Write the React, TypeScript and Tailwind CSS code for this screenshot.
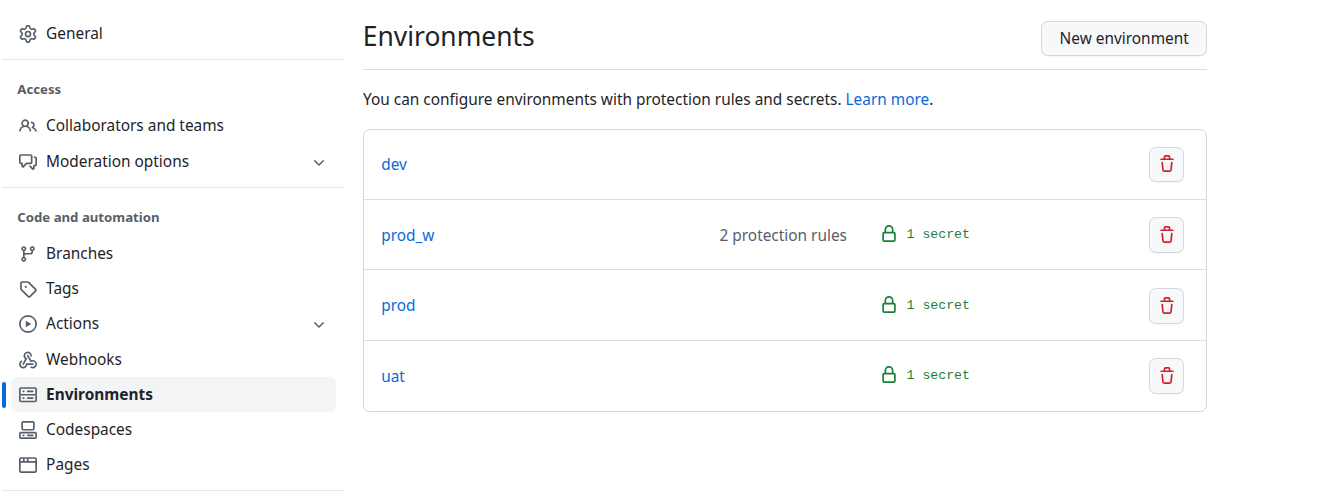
import React from "react";

const ICONS = {
  gear: "M8 0a8.2 8.2 0 0 1 .701.031C9.444.095 9.99.645 10.16 1.29l.288 1.107c.018.066.079.158.212.224.231.114.454.243.668.386.123.082.233.09.299.071l1.103-.303c.644-.176 1.392.021 1.82.63.27.385.506.792.704 1.218.315.675.111 1.422-.364 1.891l-.814.806c-.049.048-.098.147-.088.294.016.257.016.515 0 .772-.01.147.038.246.088.294l.814.806c.475.469.679 1.216.364 1.891a7.977 7.977 0 0 1-.704 1.217c-.428.61-1.176.807-1.82.63l-1.102-.302c-.067-.019-.177-.011-.3.071a5.909 5.909 0 0 1-.668.386c-.133.066-.194.158-.211.224l-.29 1.106c-.168.646-.715 1.196-1.458 1.26a8.006 8.006 0 0 1-1.402 0c-.743-.064-1.289-.614-1.458-1.26l-.289-1.106c-.018-.066-.079-.158-.212-.224a5.738 5.738 0 0 1-.668-.386c-.123-.082-.233-.09-.299-.071l-1.103.303c-.644.176-1.392-.021-1.82-.63a8.12 8.12 0 0 1-.704-1.218c-.315-.675-.111-1.422.363-1.891l.815-.806c.05-.048.098-.147.088-.294a6.214 6.214 0 0 1 0-.772c.01-.147-.038-.246-.088-.294l-.815-.806C.635 6.045.431 5.298.746 4.623a7.92 7.92 0 0 1 .704-1.217c.428-.61 1.176-.807 1.82-.63l1.102.302c.067.019.177.011.3-.071.214-.143.437-.272.668-.386.133-.066.194-.158.211-.224l.29-1.106C6.009.645 6.556.095 7.299.03 7.53.01 7.764 0 8 0Zm-.571 1.525c-.036.003-.108.036-.137.146l-.289 1.105c-.147.561-.549.967-.998 1.189-.173.086-.34.183-.5.29-.417.278-.97.423-1.529.27l-1.103-.303c-.109-.03-.175.016-.195.045-.22.312-.412.644-.573.99-.014.031-.021.11.059.19l.815.806c.411.406.562.957.53 1.456a4.709 4.709 0 0 0 0 .582c.032.499-.119 1.05-.53 1.456l-.815.806c-.081.08-.073.159-.059.19.162.346.353.677.573.989.02.03.085.076.195.046l1.102-.303c.56-.153 1.113-.008 1.53.27.161.107.328.204.501.29.447.222.85.629.997 1.189l.289 1.105c.029.109.101.143.137.146a6.6 6.6 0 0 0 1.142 0c.036-.003.108-.036.137-.146l.289-1.105c.147-.561.549-.967.998-1.189.173-.086.34-.183.5-.29.417-.278.97-.423 1.529-.27l1.103.303c.109.029.175-.016.195-.045.22-.313.411-.644.573-.99.014-.031.021-.11-.059-.19l-.815-.806c-.411-.406-.562-.957-.53-1.456a4.709 4.709 0 0 0 0-.582c-.032-.499.119-1.05.53-1.456l.815-.806c.081-.08.073-.159.059-.19a6.464 6.464 0 0 0-.573-.989c-.02-.03-.085-.076-.195-.046l-1.102.303c-.56.153-1.113.008-1.53-.27a4.44 4.44 0 0 0-.501-.29c-.447-.222-.85-.629-.997-1.189l-.289-1.105c-.029-.11-.101-.143-.137-.146a6.6 6.6 0 0 0-1.142 0ZM11 8a3 3 0 1 1-6 0 3 3 0 0 1 6 0ZM9.5 8a1.5 1.5 0 1 0-3.001.001A1.5 1.5 0 0 0 9.5 8Z",
  people: "M2 5.5a3.5 3.5 0 1 1 5.898 2.549 5.508 5.508 0 0 1 3.034 4.084.75.75 0 1 1-1.482.235 4 4 0 0 0-7.9 0 .75.75 0 0 1-1.482-.236A5.507 5.507 0 0 1 3.102 8.05 3.493 3.493 0 0 1 2 5.5ZM11 4a3.001 3.001 0 0 1 2.22 5.018 5.01 5.01 0 0 1 2.56 3.012.749.749 0 0 1-.885.954.752.752 0 0 1-.549-.514 3.507 3.507 0 0 0-2.522-2.372.75.75 0 0 1-.574-.73v-.352a.75.75 0 0 1 .416-.672A1.5 1.5 0 0 0 11 5.5.75.75 0 0 1 11 4Zm-5.5-.5a2 2 0 1 0-.001 3.999A2 2 0 0 0 5.5 3.5Z",
  discussion: "M1.75 1h8.5c.966 0 1.75.784 1.75 1.75v5.5A1.75 1.75 0 0 1 10.25 10H7.061l-2.574 2.573A1.458 1.458 0 0 1 2 11.543V10h-.25A1.75 1.75 0 0 1 0 8.25v-5.5C0 1.784.784 1 1.75 1ZM1.5 2.75v5.5c0 .138.112.25.25.25h1a.75.75 0 0 1 .75.75v2.19l2.72-2.72a.749.749 0 0 1 .53-.22h3.5a.25.25 0 0 0 .25-.25v-5.5a.25.25 0 0 0-.25-.25h-8.5a.25.25 0 0 0-.25.25Zm13 2a.25.25 0 0 0-.25-.25h-.5a.75.75 0 0 1 0-1.5h.5c.966 0 1.75.784 1.75 1.75v5.5A1.75 1.75 0 0 1 14.25 12H14v1.543a1.458 1.458 0 0 1-2.487 1.03L9.22 12.28a.749.749 0 0 1 .326-1.275.749.749 0 0 1 .734.215l2.22 2.22v-2.19a.75.75 0 0 1 .75-.75h1a.25.25 0 0 0 .25-.25Z",
  branch: "M9.5 3.25a2.25 2.25 0 1 1 3 2.122V6A2.5 2.5 0 0 1 10 8.5H6a1 1 0 0 0-1 1v1.128a2.251 2.251 0 1 1-1.5 0V5.372a2.25 2.25 0 1 1 1.5 0v1.836A2.493 2.493 0 0 1 6 7h4a1 1 0 0 0 1-1v-.628A2.25 2.25 0 0 1 9.5 3.25Zm-6 0a.75.75 0 1 0 1.5 0 .75.75 0 0 0-1.5 0Zm8.25-.75a.75.75 0 1 0 0 1.5.75.75 0 0 0 0-1.5ZM4.25 12a.75.75 0 1 0 0 1.5.75.75 0 0 0 0-1.5Z",
  tag: "M1 7.775V2.75C1 1.784 1.784 1 2.75 1h5.025c.464 0 .91.184 1.238.513l6.25 6.25a1.75 1.75 0 0 1 0 2.474l-5.026 5.026a1.75 1.75 0 0 1-2.474 0l-6.25-6.25A1.752 1.752 0 0 1 1 7.775Zm1.5 0c0 .066.026.13.073.177l6.25 6.25a.25.25 0 0 0 .354 0l5.025-5.025a.25.25 0 0 0 0-.354l-6.25-6.25a.25.25 0 0 0-.177-.073H2.75a.25.25 0 0 0-.25.25ZM6 5a1 1 0 1 1 0 2 1 1 0 0 1 0-2Z",
  play: "M8 0a8 8 0 1 1 0 16A8 8 0 0 1 8 0ZM1.5 8a6.5 6.5 0 1 0 13 0 6.5 6.5 0 0 0-13 0Zm4.879-2.773 4.264 2.559a.25.25 0 0 1 0 .428l-4.264 2.559A.25.25 0 0 1 6 10.559V5.442a.25.25 0 0 1 .379-.215Z",
  webhook: "M5.5 4.25a2.25 2.25 0 0 1 4.5 0 .75.75 0 0 0 1.5 0 3.75 3.75 0 1 0-6.14 2.889l-2.272 4.258a.75.75 0 0 0 1.324.706L7 7.25a.75.75 0 0 0-.309-1.015A2.25 2.25 0 0 1 5.5 4.25ZM7.364 3.607a.75.75 0 0 1 1.03.257l2.608 4.349a3.75 3.75 0 1 1-.628 6.785.75.75 0 0 1 .752-1.299 2.25 2.25 0 1 0-.033-3.88.75.75 0 0 1-1.03-.256L7.107 4.636a.75.75 0 0 1 .257-1.03ZM2.9 8.776A.75.75 0 0 1 2.625 9.8 2.25 2.25 0 1 0 6 11.75a.75.75 0 0 1 .75-.751h5.5a.75.75 0 0 1 0 1.5H7.425a3.751 3.751 0 1 1-5.55-3.998.75.75 0 0 1 1.024.274Z",
  server: "M1.75 1h12.5c.966 0 1.75.784 1.75 1.75v4c0 .372-.116.717-.314 1 .198.283.314.628.314 1v4a1.75 1.75 0 0 1-1.75 1.75H1.75A1.75 1.75 0 0 1 0 12.75v-4c0-.358.109-.707.314-1a1.739 1.739 0 0 1-.314-1v-4C0 1.784.784 1 1.75 1ZM1.5 2.75v4c0 .138.112.25.25.25h12.5a.25.25 0 0 0 .25-.25v-4a.25.25 0 0 0-.25-.25H1.75a.25.25 0 0 0-.25.25Zm.25 5.75a.25.25 0 0 0-.25.25v4c0 .138.112.25.25.25h12.5a.25.25 0 0 0 .25-.25v-4a.25.25 0 0 0-.25-.25ZM7 4.75A.75.75 0 0 1 7.75 4h4.5a.75.75 0 0 1 0 1.5h-4.5A.75.75 0 0 1 7 4.75ZM7.75 10h4.5a.75.75 0 0 1 0 1.5h-4.5a.75.75 0 0 1 0-1.5ZM3 4.75A.75.75 0 0 1 3.75 4h.5a.75.75 0 0 1 0 1.5h-.5A.75.75 0 0 1 3 4.75ZM3.75 10h.5a.75.75 0 0 1 0 1.5h-.5a.75.75 0 0 1 0-1.5Z",
  codespaces: "M0 11.25c0-.966.784-1.75 1.75-1.75h12.5c.966 0 1.75.784 1.75 1.75v3A1.75 1.75 0 0 1 14.25 16H1.75A1.75 1.75 0 0 1 0 14.25Zm2-9.5C2 .784 2.784 0 3.75 0h8.5C13.216 0 14 .784 14 1.75v5a1.75 1.75 0 0 1-1.75 1.75h-8.5A1.75 1.75 0 0 1 2 6.75Zm1.75-.25a.25.25 0 0 0-.25.25v5c0 .138.112.25.25.25h8.5a.25.25 0 0 0 .25-.25v-5a.25.25 0 0 0-.25-.25Zm-2 9.5a.25.25 0 0 0-.25.25v3c0 .138.112.25.25.25h12.5a.25.25 0 0 0 .25-.25v-3a.25.25 0 0 0-.25-.25ZM7 12.75a.75.75 0 0 1 .75-.75h4.5a.75.75 0 0 1 0 1.5h-4.5a.75.75 0 0 1-.75-.75Zm-4 0a.75.75 0 0 1 .75-.75h.5a.75.75 0 0 1 0 1.5h-.5a.75.75 0 0 1-.75-.75Z",
  browser: "M0 2.75C0 1.784.784 1 1.75 1h12.5c.966 0 1.75.784 1.75 1.75v10.5A1.75 1.75 0 0 1 14.25 15H1.75A1.75 1.75 0 0 1 0 13.25ZM14.5 6h-13v7.25c0 .138.112.25.25.25h12.5a.25.25 0 0 0 .25-.25Zm-6-3.5v2h6V2.75a.25.25 0 0 0-.25-.25ZM5 2.5v2h2v-2Zm-3.25 0a.25.25 0 0 0-.25.25V4.5h2v-2Z",
  lock: "M4 4a4 4 0 0 1 8 0v2h.25c.966 0 1.75.784 1.75 1.75v5.5A1.75 1.75 0 0 1 12.25 15h-8.5A1.75 1.75 0 0 1 2 13.25v-5.5C2 6.784 2.784 6 3.75 6H4Zm8.25 3.5h-8.5a.25.25 0 0 0-.25.25v5.5c0 .138.112.25.25.25h8.5a.25.25 0 0 0 .25-.25v-5.5a.25.25 0 0 0-.25-.25ZM10.5 6V4a2.5 2.5 0 1 0-5 0v2Z",
  trash: "M11 1.75V3h2.25a.75.75 0 0 1 0 1.5H2.75a.75.75 0 0 1 0-1.5H5V1.75C5 .784 5.784 0 6.75 0h2.5C10.216 0 11 .784 11 1.75ZM4.496 6.675l.66 6.6a.25.25 0 0 0 .249.225h5.19a.25.25 0 0 0 .249-.225l.66-6.6a.75.75 0 0 1 1.492.149l-.66 6.6A1.748 1.748 0 0 1 10.595 15h-5.19a1.75 1.75 0 0 1-1.741-1.575l-.66-6.6a.75.75 0 1 1 1.492-.15ZM6.5 1.75V3h3V1.75a.25.25 0 0 0-.25-.25h-2.5a.25.25 0 0 0-.25.25Z",
  chevron: "M12.78 5.22a.749.749 0 0 1 0 1.06l-4.25 4.25a.749.749 0 0 1-1.06 0L3.22 6.28a.749.749 0 1 1 1.06-1.06L8 8.939l3.72-3.719a.749.749 0 0 1 1.06 0Z",
};

type IconName = keyof typeof ICONS;

function Icon({ name, className = "size-[18px]" }: { name: IconName; className?: string }) {
  return (
    <svg viewBox="0 0 16 16" fill="currentColor" aria-hidden="true" className={`shrink-0 ${className}`}>
      <path d={ICONS[name]} />
    </svg>
  );
}

type Item = { icon: IconName; label: string; expandable?: boolean; active?: boolean };

const ACCESS: Item[] = [
  { icon: "people", label: "Collaborators and teams" },
  { icon: "discussion", label: "Moderation options", expandable: true },
];

const AUTOMATION: Item[] = [
  { icon: "branch", label: "Branches" },
  { icon: "tag", label: "Tags" },
  { icon: "play", label: "Actions", expandable: true },
  { icon: "webhook", label: "Webhooks" },
  { icon: "server", label: "Environments", active: true },
  { icon: "codespaces", label: "Codespaces" },
  { icon: "browser", label: "Pages" },
];

function NavItem({ icon, label, expandable, active }: Item) {
  return (
    <li className={`relative mx-[8.8px] flex h-[35.2px] items-center rounded-[6.6px] pr-[9.5px] pl-[8.2px] ${active ? "bg-[#f3f4f6] font-bold" : ""}`}>
      {active && <span className="absolute top-[5px] -left-[9px] h-[26px] w-1 rounded-[6px] bg-[#0969da]" />}
      <Icon name={icon} className="size-[18px] text-[#57606a]" />
      <a href="#" className="ml-[9.1px] flex-1 leading-[22px]">{label}</a>
      {expandable && <Icon name="chevron" className="mt-[2px] size-4 text-[#57606a]" />}
    </li>
  );
}

function NavGroup({ title, items }: { title: string; items: Item[] }) {
  return (
    <section className="mt-[7.7px] border-t border-[#e6e8eb]">
      <h3 className="px-[15.3px] pt-[20px] pb-[8.8px] text-[13.2px] leading-[19.8px] font-bold text-[#57606a]">{title}</h3>
      <ul>
        {items.map((item) => (
          <NavItem key={item.label} {...item} />
        ))}
      </ul>
    </section>
  );
}

type Environment = { name: string; rules?: string; secrets?: string };

const ENVIRONMENTS: Environment[] = [
  { name: "dev" },
  { name: "prod_w", rules: "2 protection rules", secrets: "1 secret" },
  { name: "prod", secrets: "1 secret" },
  { name: "uat", secrets: "1 secret" },
];

function EnvironmentRow({ name, rules, secrets }: Environment) {
  return (
    <li className="flex h-[70.4px] items-center border-t border-[#d8dee4] pt-[1.2px] pr-[22px] pl-[17.2px] first:h-[69px] first:border-t-0 first:pt-0 last:h-[71px] last:pt-[1px]">
      <a href="#" className="flex-1 text-[#0969da]">{name}</a>
      <span className="text-[#57606a]">{rules}</span>
      <div className="mb-[1.8px] ml-[33px] flex w-[269px] items-center text-[#1a7f37]">
        {secrets && (
          <>
            <Icon name="lock" />
            <span className="mt-[1.6px] ml-[8.6px] font-['Liberation_Mono',monospace] text-[13.2px] leading-5">{secrets}</span>
          </>
        )}
      </div>
      <button
        aria-label={`Delete ${name}`}
        className="flex h-[35.8px] w-[35px] items-center justify-center rounded-[6.6px] border border-[#d5d8db] bg-[#f6f8fa] text-[#cf222e] shadow-[0_1px_0_rgba(31,35,40,0.04)]"
      >
        <Icon name="trash" />
      </button>
    </li>
  );
}

export default function App() {
  return (
    <div className="flex h-[491px] overflow-hidden bg-white font-['Noto_Sans',sans-serif] text-[15.4px] leading-[23.1px] text-[#1f2328]">
      <nav className="ml-[2px] w-[343px] shrink-0 pt-[16.4px]">
        <ul>
          <NavItem icon="gear" label="General" />
        </ul>
        <NavGroup title="Access" items={ACCESS} />
        <NavGroup title="Code and automation" items={AUTOMATION} />
        <div className="mt-[7.2px] border-t border-[#e6e8eb]" />
      </nav>
      <main className="ml-[18px] w-[844px]">
        <header className="flex h-[70px] items-start justify-between border-b border-[#d8dee4] pt-[16px]">
          <h1 className="mt-[1px] -ml-[0.2px] text-[26.4px] leading-[39.6px]">Environments</h1>
          <button className="mt-[5px] h-[35px] w-[166px] rounded-[6.6px] border border-[#d5d8db] bg-[#f6f8fa] pl-[0.4px] leading-[22px] shadow-[0_1px_0_rgba(31,35,40,0.04)]">
            New environment
          </button>
        </header>
        <p className="mt-[17.6px]">
          You can configure environments with protection rules and secrets.{" "}
          <a href="#" className="text-[#0969da]">Learn more</a>.
        </p>
        <ul className="mt-[18.3px] rounded-[6.6px] border border-[#d0d7de]">
          {ENVIRONMENTS.map((environment) => (
            <EnvironmentRow key={environment.name} {...environment} />
          ))}
        </ul>
      </main>
    </div>
  );
}
